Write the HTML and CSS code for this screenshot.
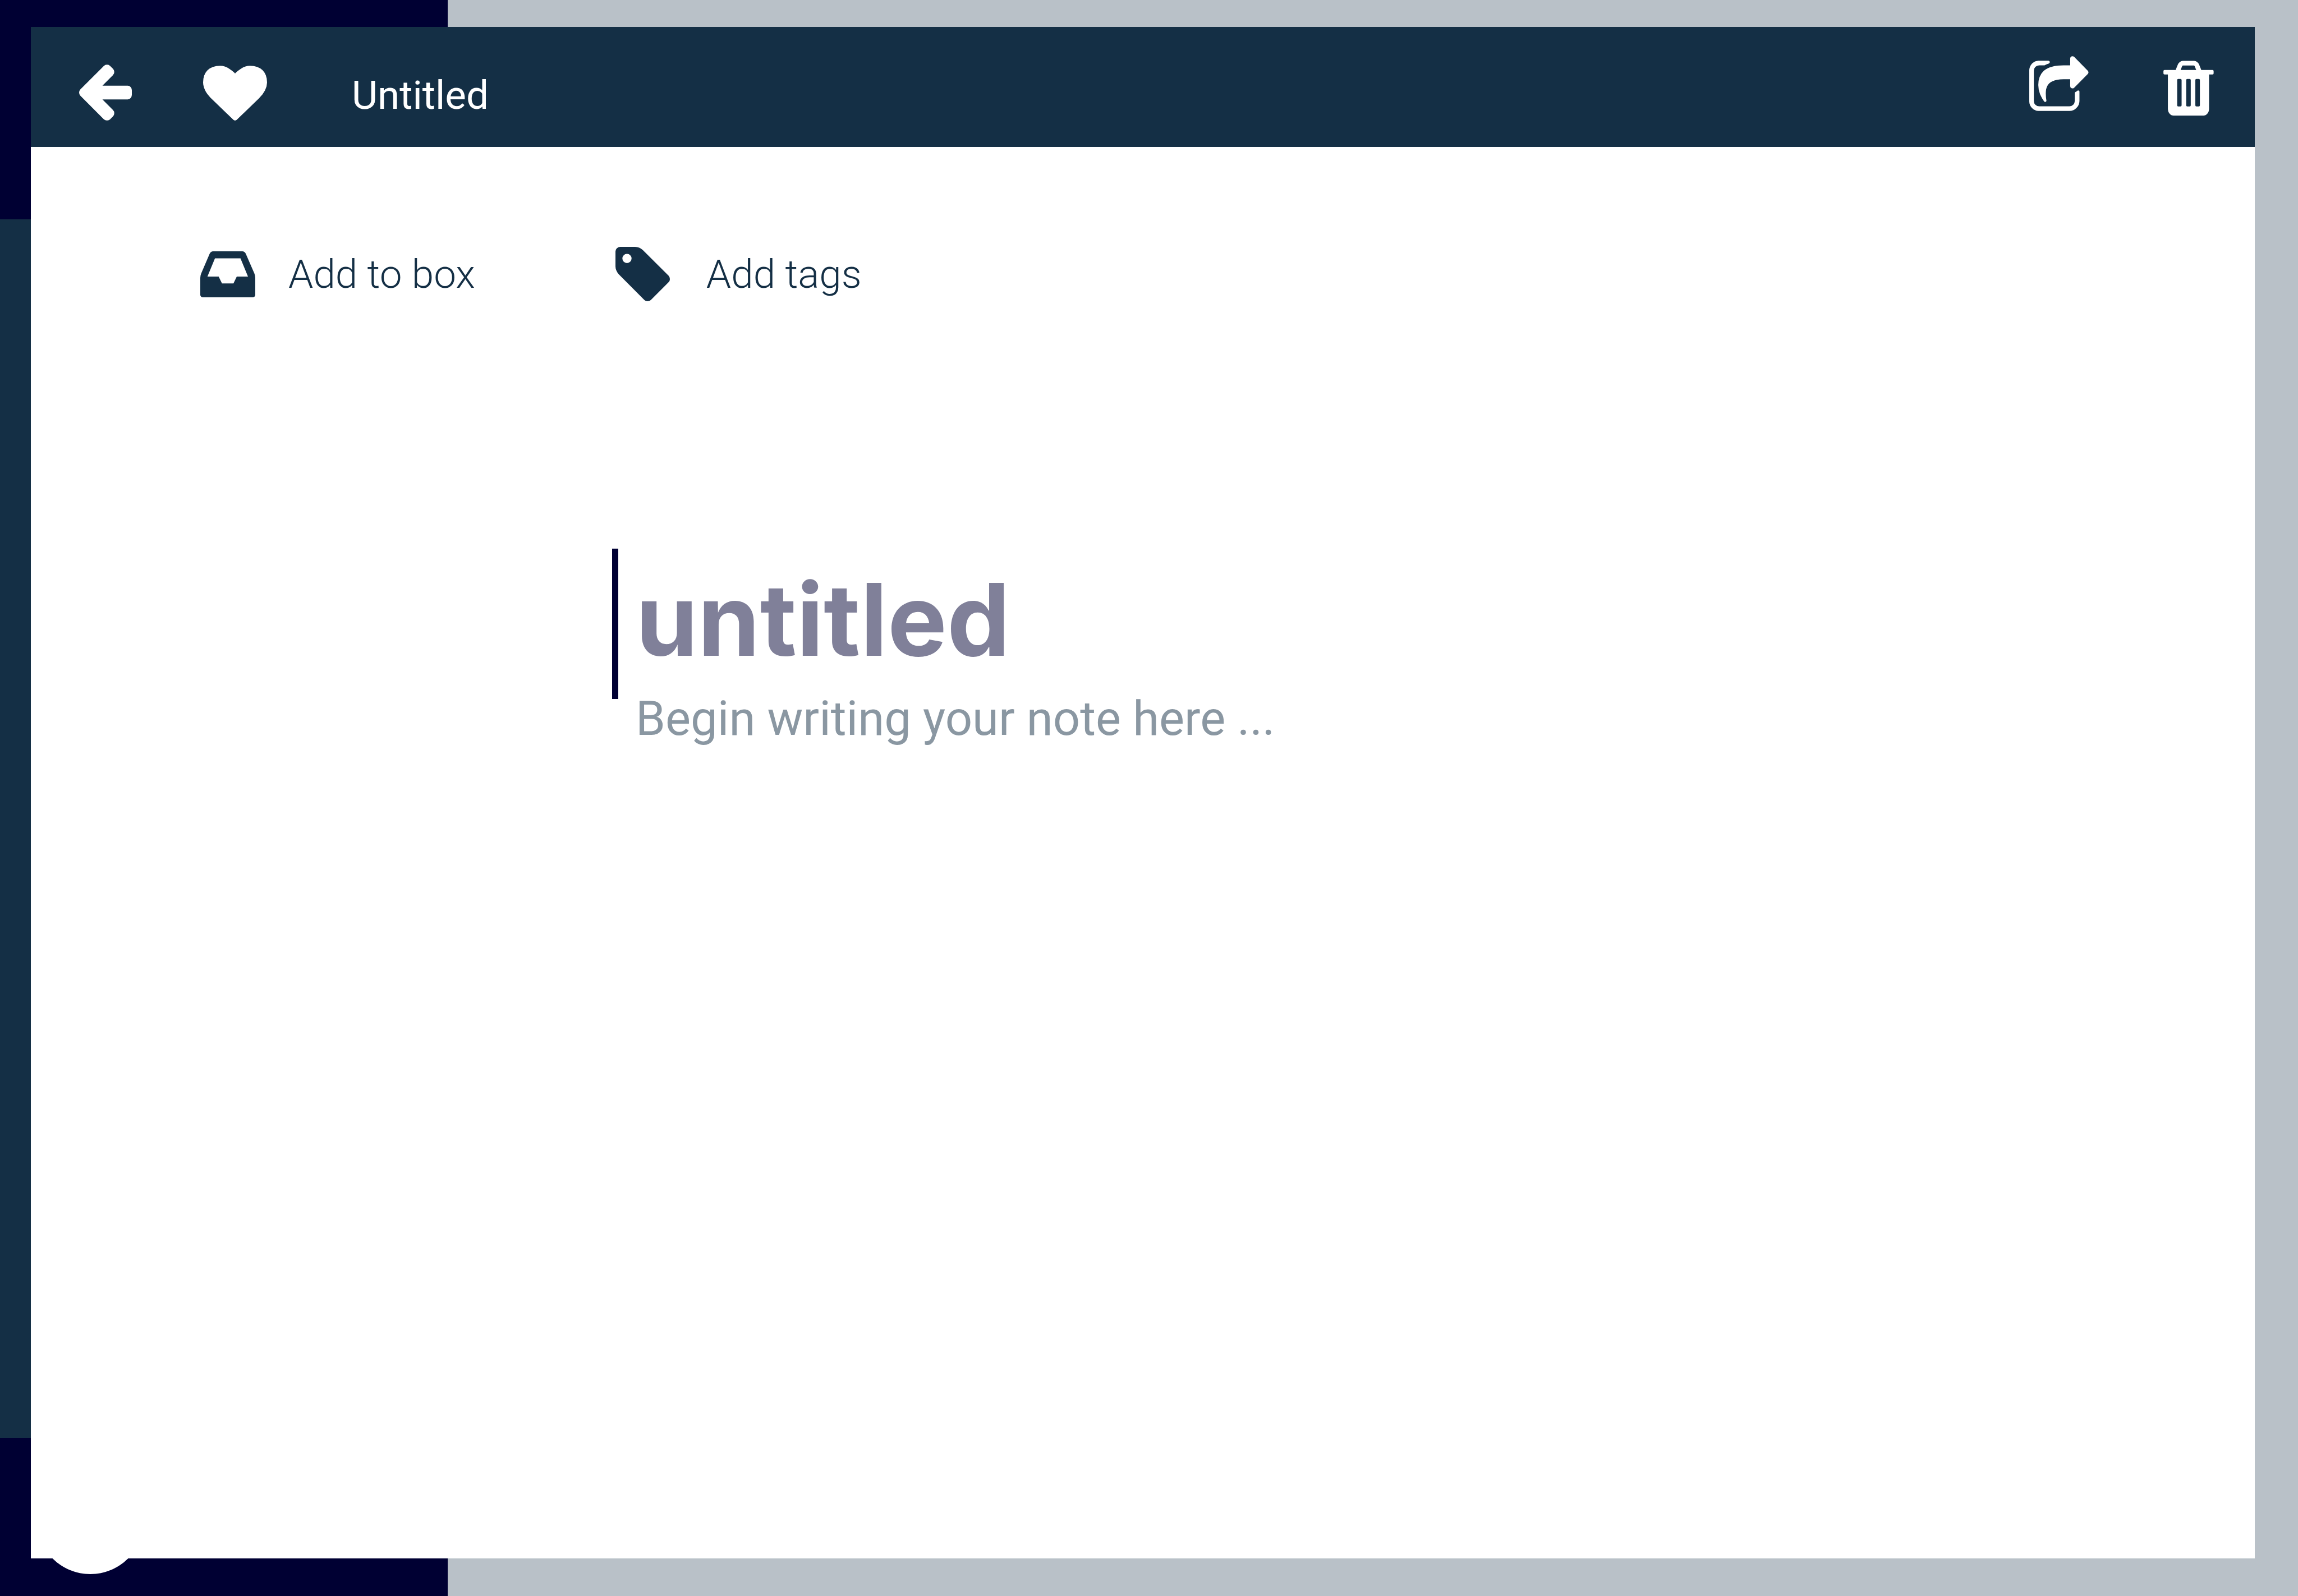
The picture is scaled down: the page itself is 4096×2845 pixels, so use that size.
FILE: index.html
```html
<!DOCTYPE html>
<html lang="en">
<head>
  <meta charset="utf-8">
  <meta name="viewport" content="width=device-width, initial-scale=1">
  <title>Untitled note</title>
  <link rel="stylesheet" href="styles.css">
</head>
<body>
  <div class="app">
    <aside class="sidebar">
      <div class="sidebar-head"></div>
      <nav class="sidebar-nav"></nav>
      <div class="sidebar-foot"><span class="sidebar-badge"></span></div>
    </aside>

    <main class="note">
      <header class="note-bar">
        <div class="note-bar-start">
          <button class="icon-button" type="button" aria-label="Back">
            <svg class="icon-back" viewBox="64 117 1472 1558" aria-hidden="true"><path d="M1536 832v128q0 53-32.500 90.500t-84.500 37.500h-704l293 294q38 36 38 90t-38 90l-75 76q-37 37-90 37-52 0-91-37l-651-652q-37-37-37-90 0-52 37-91l651-650q38-38 91-38 52 0 90 38l75 74q38 38 38 91t-38 91l-293 293h704q52 0 84.500 37.500t32.500 90.500z"/></svg>
          </button>
          <button class="icon-button" type="button" aria-label="Favourite">
            <svg class="icon-heart" viewBox="0 128 1792 1536" aria-hidden="true"><path d="M896 1664q-26 0-44-18l-624-602q-10-8-27.500-26t-55.500-65.500-68-97.500-53.500-121-23.500-138q0-220 127-344t351-124q62 0 126.500 21.500t120 58 95.500 68.500 76 68q36-36 76-68t95.500-68.500 120-58 126.500-21.500q224 0 351 124t127 344q0 221-229 450l-623 600q-18 18-44 18z"/></svg>
          </button>
          <h1 class="note-name">Untitled</h1>
        </div>
        <div class="note-bar-end">
          <button class="icon-button" type="button" aria-label="Share">
            <svg class="icon-share" viewBox="36 48 468 468" aria-hidden="true">
              <path d="M108 84H188Q198 86 198 96Q198 102 190 106Q170 112 156 121H114Q96 121 84 133Q72 145 72 163V401Q72 419 84 431Q96 443 114 443H352Q370 443 382 431Q394 419 394 401V339Q394 335 398 332Q407 328 414 321Q420 316 426 319Q431 321 431 327V401Q431 433 407 456Q384 480 352 480H108Q79 478 57 456Q36 433 36 404V157Q38 128 58 106Q80 85 108 84Z"/>
              <path d="M358 121V67Q358 55 369 50Q380 47 389 54L496 163Q502 169 502 176Q502 183 496 189L389 297Q380 305 369 301Q358 297 358 284V230H306Q250 230 215 248Q166 272 166 340Q166 372 171 398Q172 405 165 408Q158 411 152 403Q134 378 121 348Q107 311 107 275Q107 204 150 164Q201 121 306 121Z"/>
            </svg>
          </button>
          <button class="icon-button" type="button" aria-label="Delete">
            <svg class="icon-trash" viewBox="48 18 396 468" aria-hidden="true">
              <path fill-rule="evenodd" d="M144 127L161 85Q166 73 177 64Q188 55 200 55H290Q302 55 313 64Q324 73 329 85L346 127H434Q443 127 443 136V154Q443 163 434 163H407V432Q407 455 394 470.500Q381 486 363 486H127Q109 486 96 470.500Q83 455 83 432V163H57Q48 163 48 154V136Q48 127 57 127ZM183 127H306L293 95Q291 92 288 92H201Q198 92 196 95ZM164 198Q156 198 156 207V405Q156 414 164 414H182Q191 414 191 405V207Q191 198 182 198ZM236 198Q227 198 227 207V405Q227 414 236 414H254Q263 414 263 405V207Q263 198 254 198ZM308 198Q299 198 299 207V405Q299 414 308 414H326Q335 414 335 405V207Q335 198 326 198Z"/>
            </svg>
          </button>
        </div>
      </header>

      <div class="note-tools">
        <button class="tool" type="button">
          <svg class="icon-inbox" viewBox="39 78 431 360" aria-hidden="true"><path fill-rule="evenodd" d="M183 276H95L154 133H354L413 276H325L299 330H209ZM470 285V420Q470 427 464 433Q459 438 452 438H57Q50 438 45 433Q39 427 39 420V285Q39 268 46 251L112 97Q115 89 123 83Q131 78 139 78H369Q377 78 385 83Q393 89 396 97L463 251Q470 268 470 285Z"/></svg>
          Add to box
        </button>
        <button class="tool" type="button">
          <svg class="icon-tag" viewBox="51 43 452 426" aria-hidden="true"><path fill-rule="evenodd" d="M177 134A36 36 0 1 0 105 134A36 36 0 1 0 177 134ZM477 295Q477 310 467 320L328 459Q317 469 302 469Q287 469 277 459L76 257Q66 247 58 229Q51 212 51 197V79Q51 65 62 54Q73 43 87 43H204Q219 43 237 50Q254 58 265 68L467 269Q477 280 477 295Z"/></svg>
          Add tags
        </button>
      </div>

      <form class="editor">
        <span class="editor-caret"></span>
        <input class="editor-title" type="text" placeholder="untitled" aria-label="Note title">
        <textarea class="editor-text" placeholder="Begin writing your note here ..." aria-label="Note text"></textarea>
      </form>
    </main>
  </div>
</body>
</html>
```
FILE: styles.css
```css
:root {
  --navy: #142f45;
  --midnight: #000033;
  --mist: #b9c1c8;
  --white: #ffffff;
}

* {
  box-sizing: border-box;
}

body {
  margin: 0;
  font-family: Roboto, "Liberation Sans", sans-serif;
  color: var(--navy);
}

button,
input,
textarea {
  margin: 0;
  padding: 0;
  border: 0;
  outline: 0;
  background: none;
  color: inherit;
  font: inherit;
}

svg {
  display: block;
  flex: none;
  fill: currentColor;
}

.app {
  position: relative;
  display: flex;
  min-height: 100vh;
  background: var(--mist);
}

/* Sidebar behind the open note */
.sidebar {
  display: flex;
  flex-direction: column;
  width: 798px;
  background: var(--midnight);
}

.sidebar-head {
  height: 391px;
}

.sidebar-nav {
  flex: 1;
  background: var(--navy);
}

.sidebar-foot {
  display: flex;
  align-items: flex-end;
  height: 282px;
  padding: 0 66px 39px;
}

.sidebar-badge {
  width: 190px;
  height: 190px;
  border-radius: 50%;
  background: var(--white);
}

/* Note laid over the app */
.note {
  position: absolute;
  inset: 48px 77px 67px 55px;
  display: flex;
  flex-direction: column;
  background: var(--white);
}

.note-bar {
  display: flex;
  justify-content: space-between;
  align-items: flex-start;
  height: 214px;
  padding: 0 73px 0 86px;
  background: var(--navy);
  color: var(--white);
}

.note-bar-start {
  display: flex;
  align-items: flex-end;
  gap: 127px;
  padding-top: 67px;
}

.note-bar-end {
  display: flex;
  gap: 133px;
  padding-top: 52px;
}

.note-name {
  margin: 0 0 0 24px;
  font-size: 71px;
  font-weight: 400;
  line-height: 90px;
}

.icon-button {
  cursor: pointer;
}

.icon-back {
  width: 94px;
  height: 100px;
}

.icon-heart {
  width: 114px;
  height: 98px;
}

.icon-share {
  width: 106px;
  height: 106px;
}

.icon-trash {
  width: 90px;
  height: 106px;
}

.note-tools {
  display: flex;
  align-items: center;
  gap: 250px;
  padding: 178px 302px 0;
}

.tool {
  display: flex;
  align-items: center;
  gap: 59px;
  font-size: 71px;
  font-weight: 300;
  line-height: 90px;
  cursor: pointer;
}

.icon-inbox {
  width: 98px;
  height: 82px;
}

.icon-tag {
  width: 103px;
  height: 97px;
}

.editor {
  flex: 1;
  display: grid;
  grid-template-columns: 11px 1fr;
  grid-template-rows: 268px 1fr;
  column-gap: 31px;
  padding: 441px 302px 67px 1036px;
}

.editor-caret {
  background: var(--midnight);
}

.editor-title {
  width: 100%;
  padding-bottom: 16px;
  font-family: Inter, "Liberation Sans", sans-serif;
  font-size: 178px;
  font-weight: 700;
  color: var(--midnight);
}

.editor-text {
  grid-column: 2;
  width: 100%;
  resize: none;
  font-size: 85px;
  line-height: 70px;
}

.editor-title::placeholder {
  color: #808099;
  opacity: 1;
}

.editor-text::placeholder {
  color: #8a97a2;
  opacity: 1;
}
```
